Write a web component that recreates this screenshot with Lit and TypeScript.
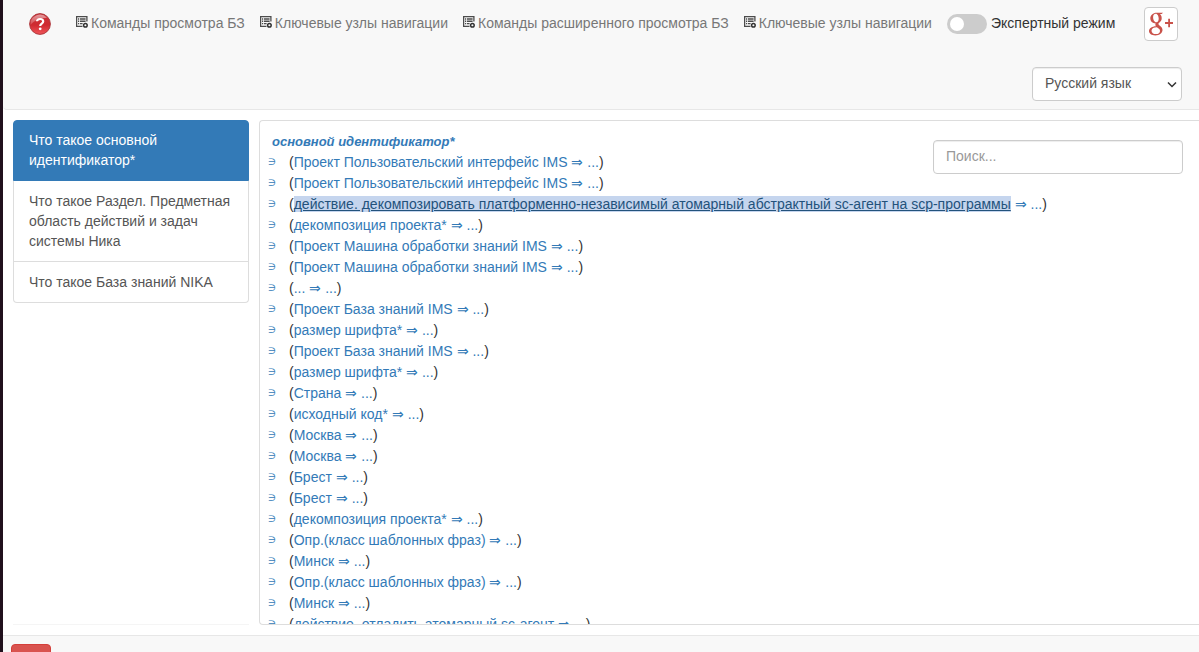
import { LitElement, html, css, svg } from "lit";
import { customElement, state } from "lit/decorators.js";

const MENUS = [
  "Команды просмотра БЗ",
  "Ключевые узлы навигации",
  "Команды расширенного просмотра БЗ",
  "Ключевые узлы навигации",
];

const HISTORY = [
  "Что такое основной идентификатор*",
  "Что такое Раздел. Предметная область действий и задач системы Ника",
  "Что такое База знаний NIKA",
];

const ITEMS = [
  "Проект Пользовательский интерфейс IMS",
  "Проект Пользовательский интерфейс IMS",
  "действие. декомпозировать платформенно-независимый атомарный абстрактный sc-агент на scp-программы",
  "декомпозиция проекта*",
  "Проект Машина обработки знаний IMS",
  "Проект Машина обработки знаний IMS",
  "...",
  "Проект База знаний IMS",
  "размер шрифта*",
  "Проект База знаний IMS",
  "размер шрифта*",
  "Страна",
  "исходный код*",
  "Москва",
  "Москва",
  "Брест",
  "Брест",
  "декомпозиция проекта*",
  "Опр.(класс шаблонных фраз)",
  "Минск",
  "Опр.(класс шаблонных фраз)",
  "Минск",
  "действие. отладить атомарный sc-агент",
];
const SELECTED = 2;

const menuIcon = svg`<svg class="menu-icon" viewBox="0 0 12 12" aria-hidden="true">
  <path d="M6.5 10.4H.6V.6h10.3v5" fill="none" stroke="#4c4c4c" stroke-width="1.3"/>
  <path d="M2 3h1.2M4 3h5.6M2 5.3h1.2M4 5.3h5.6M2 7.6h1.2M4 7.6h2.6" stroke="#4c4c4c" stroke-width="1.4"/>
  <circle cx="9.4" cy="9.3" r="1.8" fill="none" stroke="#333" stroke-width="1.5"/>
</svg>`;

const helpIcon = svg`<svg class="help-icon" viewBox="0 0 22 22" aria-hidden="true">
  <defs>
    <linearGradient id="ball" x1="0" y1="0" x2="0" y2="1">
      <stop offset="0" stop-color="#c8343a"/><stop offset=".55" stop-color="#cf2a30"/><stop offset="1" stop-color="#f0555a"/>
    </linearGradient>
    <linearGradient id="gloss" x1="0" y1="0" x2="0" y2="1">
      <stop offset="0" stop-color="#fff" stop-opacity=".5"/><stop offset="1" stop-color="#fff" stop-opacity=".15"/>
    </linearGradient>
  </defs>
  <circle cx="11" cy="11" r="10.4" fill="url(#ball)" stroke="#a93135" stroke-width=".9"/>
  <path d="M1.6 12A9.4 9.4 0 0 1 18 4.8C13 5 5 7 1.6 12Z" fill="url(#gloss)"/>
  <path d="M8 8.3C8 5.2 14.2 5.2 14.2 8.4c0 2.2-3 2.3-3 4.6" fill="none" stroke="#fff" stroke-width="2.2"/>
  <circle cx="11.2" cy="15.8" r="1.4" fill="#fff"/>
</svg>`;

const googleIcon = svg`<svg class="google-icon" viewBox="0 0 24 24" aria-hidden="true">
  <g fill="#c9524a">
    <path fill-rule="evenodd" d="M14 .8H7.8C3.9.8 1.3 3.3 1.3 6.3c0 2.9 2.2 5.1 5.4 5.1-.6 1.1-.4 1.9.4 2.8C3 14.3 0 16.2 0 19c0 2.6 2.6 4.4 6.3 4.4 4.4 0 7.2-2.3 7.2-5.3 0-2.2-1.1-3.3-3-4.7-1.5-1.1-1.6-1.6-.3-2.6 1.6-1.2 2.5-2.4 2.5-4.5 0-1.9-.7-3.3-1.8-4.2h1.8Zm-7.2 1c1.7 0 2.9 2.6 2.9 5 0 1.9-.8 3.4-2.4 3.4C5.400 10.200 4.100 7.600 4.100 5.200 4.100 3.200 5 1.800 6.800 1.800Zm1.100 13.500c2 1.300 3.100 2.100 3.100 3.600 0 1.900-1.500 3.200-4.100 3.200-2.600 0-4.400-1.400-4.400-3.400 0-2.300 2.400-3.400 5.400-3.400Z"/>
    <path d="M19.200 6.800h1.800v3.300h3.200v1.800H21v3.300h-1.800v-3.300H16v-1.800h3.200Z"/>
  </g>
</svg>`;

@customElement("app-root")
export class AppRoot extends LitElement {
  @state() private active = 0;

  static styles = css`
    :host {
      display: flex;
      flex-direction: column;
      height: 100vh;
      box-sizing: border-box;
      overflow: hidden;
      border-left: 3px solid #20101c;
      background: #fff;
      color: #333;
      font: 14px/20px "Liberation Sans", Arial, sans-serif;
    }
    * { box-sizing: border-box; }
    a { color: #337ab7; text-decoration: none; }
    button, input, select { font: inherit; }
    .header {
      background: #f8f8f8;
      border-bottom: 1px solid #e7e7e7;
      border-bottom-left-radius: 4px;
      padding: 7px 17px 8px 26px;
      display: flex;
      flex-direction: column;
      align-items: flex-end;
      gap: 26px;
    }
    .bar { display: flex; width: 100%; align-items: center; }
    .help { border: 0; padding: 0; background: none; height: 22px; margin-right: 25px; }
    .help-icon { display: block; width: 22px; height: 22px; }
    .menus { display: flex; gap: 15px; white-space: nowrap; }
    .menu { border: 0; background: none; padding: 0 0 2px; color: #777; display: flex; align-items: center; gap: 3px; height: 32px; }
    .menu-icon { width: 12px; height: 12px; flex: none; margin-bottom: 2px; }
    .expert { display: flex; align-items: center; gap: 4px; margin-left: 15px; white-space: nowrap; }
    .expert span { padding-bottom: 2px; }
    .switch {
      appearance: none;
      width: 40px;
      height: 20px;
      margin: 0;
      padding: 3px;
      border-radius: 10px;
      background: #ccc;
      display: flex;
    }
    .switch::before { content: ""; width: 14px; height: 14px; border-radius: 50%; background: #fff; }
    .switch:checked { background: #337ab7; justify-content: flex-end; }
    .google {
      margin-left: auto;
      margin-right: 4px;
      width: 34px;
      height: 34px;
      padding: 4px;
      border: 1px solid #ccc;
      border-radius: 4px;
      background: #fff;
    }
    .google-icon { display: block; width: 24px; height: 24px; }
    .lang, .search {
      height: 34px;
      border: 1px solid #ccc;
      border-radius: 4px;
      background: #fff;
      color: #555;
      box-shadow: inset 0 1px 1px rgba(0, 0, 0, 0.075);
    }
    .lang-box { position: relative; width: 150px; }
    .lang { appearance: none; width: 100%; padding: 5px 12px 7px; }
    .chevron { position: absolute; right: 5px; top: 14px; width: 10px; height: 8px; pointer-events: none; }
    .main { flex: 1; min-height: 0; display: flex; gap: 10px; padding: 10px 0 10px 10px; }
    .side { flex: none; width: 236px; border-bottom: 1px solid #f5f5f5; }
    .history { list-style: none; margin: 0; padding: 0; }
    .entry { display: block; padding: 10px 15px; color: #555; border: 1px solid #ddd; border-top: 0; }
    .history li:first-child .entry { border-top: 1px solid #ddd; border-radius: 4px 4px 0 0; }
    .history li:last-child .entry { border-radius: 0 0 4px 4px; }
    .history li .entry.on { background: #337ab7; border-color: #337ab7; color: #fff; }
    .history li:first-child .entry { padding-top: 9px; }
    .content {
      flex: 1;
      min-width: 0;
      position: relative;
      overflow: hidden;
      border: 1px solid #ddd;
      border-right: 0;
      border-radius: 4px 0 0 4px;
      padding: 11px 8px 0;
    }
    .title { margin: 0 4px; font-size: 13px; line-height: 20px; font-style: italic; }
    .list { list-style: none; margin: 0; padding: 0; }
    .row { display: flex; line-height: 21px; white-space: nowrap; }
    .mark { width: 21px; font-family: "DejaVu Sans", sans-serif; font-size: 9px; line-height: 20px; }
    .picked { background: #c5d5ee; color: #23527c; text-decoration: underline; line-height: 16px; }
    .search { position: absolute; top: 19px; right: 16px; width: 250px; padding: 5px 12px 7px; }
    .search::placeholder { color: #999; opacity: 1; }
    .footer { flex: none; height: 17px; overflow: hidden; background: #f8f8f8; border-top: 1px solid #e7e7e7; padding: 8px; }
    .stop { display: block; width: 40px; height: 34px; border: 1px solid #d43f3a; border-radius: 4px; background: #d9534f; }
  `;

  render() {
    return html`
      <header class="header">
        <div class="bar">
          <button class="help" aria-label="Помощь">${helpIcon}</button>
          <nav class="menus">
            ${MENUS.map((m) => html`<button class="menu">${menuIcon}<span>${m}</span></button>`)}
          </nav>
          <label class="expert"><input class="switch" type="checkbox" role="switch" /><span>Экспертный режим</span></label>
          <button class="google" aria-label="Google+">${googleIcon}</button>
        </div>
        <div class="lang-box">
          <select class="lang" aria-label="Язык"><option>Русский язык</option></select>
          <svg class="chevron" viewBox="0 0 10 8" aria-hidden="true"><path d="M1 1.5l4 4 4-4" fill="none" stroke="#333" stroke-width="1.5" /></svg>
        </div>
      </header>
      <main class="main">
        <aside class="side">
          <ul class="history">
            ${HISTORY.map(
              (h, i) => html`<li>
                <a class="entry ${i === this.active ? "on" : ""}" href="#" @click=${() => (this.active = i)}>${h}</a>
              </li>`
            )}
          </ul>
        </aside>
        <section class="content">
          <h1 class="title"><a href="#">основной идентификатор*</a></h1>
          <ul class="list">
            ${ITEMS.map(
              (t, i) => html`<li class="row">
                <a class="mark" href="#">∋</a>
                <span>(<a class=${i === SELECTED ? "picked" : ""} href="#">${t}</a> <a href="#">⇒</a> <a href="#">...</a>)</span>
              </li>`
            )}
          </ul>
          <input class="search" type="search" placeholder="Поиск..." aria-label="Поиск" />
        </section>
      </main>
      <footer class="footer"><button class="stop" aria-label="Меню"></button></footer>
    `;
  }
}
